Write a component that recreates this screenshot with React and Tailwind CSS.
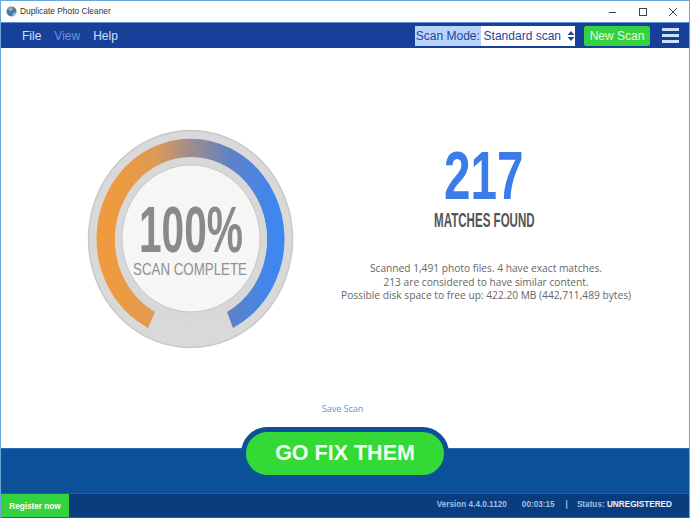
import { useId } from "react";

const sans = "font-['Liberation_Sans',Arial,sans-serif]";
const open = "font-['Open_Sans','Noto_Sans',sans-serif]";

const Gauge = () => {
  const id = useId();
  return (
    <svg width="216" height="226" viewBox="83 126 216 226" className="shrink-0 overflow-visible">
      <defs>
        <linearGradient id={id} x1="95" x2="283" y1="0" y2="0" gradientUnits="userSpaceOnUse">
          <stop offset="0.12" stopColor="#ee9a3f" />
          <stop offset="0.32" stopColor="#de9a55" />
          <stop offset="0.52" stopColor="#9b8c90" />
          <stop offset="0.72" stopColor="#5e82c6" />
          <stop offset="0.95" stopColor="#3f86ef" />
        </linearGradient>
      </defs>
      <ellipse cx="190.5" cy="239" rx="102" ry="108.5" fill="#d9d9d9" stroke="#c8c8c8" strokeWidth="1.5" />
      <path
        d="M148 328 A94 100 0 1 1 233 328 L227 312 A76 82 0 1 0 155 312 Z"
        fill={`url(#${id})`}
      />
      <ellipse cx="191" cy="239" rx="76" ry="82" fill="#d8d8d8" />
      <ellipse cx="191" cy="238.5" rx="69" ry="73.5" fill="#f6f6f6" stroke="#c8c8c8" strokeWidth="1" />
      <text
        x="139"
        y="252"
        fontSize="65"
        fontWeight="700"
        fill="#8a8a8a"
        textLength="104"
        lengthAdjust="spacingAndGlyphs"
        fontFamily="'Liberation Sans', Arial, sans-serif"
      >
        100%
      </text>
      <text
        x="133"
        y="275"
        fontSize="16"
        fill="#8f8f8f"
        textLength="114"
        lengthAdjust="spacingAndGlyphs"
        fontFamily="'Liberation Sans', Arial, sans-serif"
      >
        SCAN COMPLETE
      </text>
    </svg>
  );
};

const WindowControls = () => (
  <div className="flex items-center text-[#444]">
    <svg width="30" height="12" viewBox="0 0 30 12" className="mr-[1px]">
      <path d="M12 6.5h7" stroke="currentColor" strokeWidth="1" />
    </svg>
    <svg width="30" height="12" viewBox="0 0 30 12">
      <rect x="11.5" y="2.5" width="7" height="7" fill="none" stroke="currentColor" strokeWidth="1" />
    </svg>
    <svg width="30" height="12" viewBox="0 0 30 12" className="mr-[1px]">
      <path d="M11 2l8 8M19 2l-8 8" stroke="currentColor" strokeWidth="1" />
    </svg>
  </div>
);

export default function App() {
  return (
    <div className={`flex h-[518px] w-[690px] flex-col overflow-hidden border-x border-t border-[#6aa6da] bg-white ${sans}`}>
      {/* title bar */}
      <div className="flex h-[21px] shrink-0 items-center justify-between pl-[5px]">
        <div className="flex items-center gap-[3px]">
          <svg width="11" height="11" viewBox="0 0 11 11">
            <circle cx="5.5" cy="5.5" r="5" fill="#3f7fa8" />
            <path d="M2 3.5a4 4 0 0 1 4-2.5l1 2-2.5 2.5z" fill="#c9a27c" />
            <path d="M6 9l3-3 1 1-2 3z" fill="#a5c8dc" />
          </svg>
          <span className="whitespace-nowrap text-[8.4px] leading-none text-[#333]">Duplicate Photo Cleaner</span>
        </div>
        <WindowControls />
      </div>

      {/* menu bar */}
      <div className="flex h-[26px] shrink-0 items-center border-t border-[#5f8fd0] bg-[#17409a] pl-[21px] pr-[10px]">
        <nav className="flex items-center gap-[13px] text-[12px] text-[#cfe0fb]">
          <span>File</span>
          <span className="text-[#6f93cf]">View</span>
          <span>Help</span>
        </nav>
        <div className="ml-auto flex h-[20px] w-[160px] items-center whitespace-nowrap text-[12px]">
          <span className="flex h-full w-[66px] items-center justify-center bg-[#b9d3f9] text-[#24459a]">Scan Mode:</span>
          <span className="flex h-full flex-1 items-center bg-white pl-[3px] text-[#24459a]">
            Standard scan
            <svg width="8" height="12" viewBox="0 0 8 12" className="ml-[6px]">
              <path d="M4 1l3.5 4h-7zM4 11l3.5-4h-7z" fill="#24459a" />
            </svg>
          </span>
        </div>
        <button className="ml-[9px] flex h-[20px] w-[66px] items-center justify-center rounded-[2px] bg-[#35d23f] text-[12px] text-[#e4fbe4]">
          New Scan
        </button>
        <div className="ml-[12px] flex w-[17px] flex-col gap-[3px]">
          <div className="h-[3px] bg-[#cfe0fb]" />
          <div className="h-[3px] bg-[#cfe0fb]" />
          <div className="h-[3px] bg-[#cfe0fb]" />
        </div>
      </div>

      {/* main */}
      <div className="relative flex min-h-0 flex-1 flex-col">
        <div className="flex flex-1 items-start pl-[82px] pt-[78px]">
          <Gauge />
          <div className="flex w-[374px] shrink-0 flex-col items-center pt-[15px]">
            <div className="mr-[4px] scale-x-[0.7] text-[68px] font-bold leading-[68px] text-[#3b7cea]">217</div>
            <div className="mr-[4px] mt-[-1px] scale-x-[0.55] whitespace-nowrap text-[21px] font-bold leading-[24px] text-[#555]">
              MATCHES FOUND
            </div>
            <div className={`mt-[30px] whitespace-nowrap text-center text-[10.2px] leading-[13.5px] text-[#666] ${open}`}>
              <p>Scanned 1,491 photo files. 4 have exact matches.</p>
              <p>213 are considered to have similar content.</p>
              <p>Possible disk space to free up: 422.20 MB (442,711,489 bytes)</p>
            </div>
          </div>
        </div>
        <div className={`mb-[33px] pr-[5px] text-center text-[9px] leading-[12px] text-[#4f9bd9] ${open}`}>Save Scan</div>
      </div>

      {/* action band */}
      <div className="relative h-[45px] shrink-0 border-t border-[#2f6db5] bg-[#0b5099]">
        <button className="absolute left-1/2 top-[-22px] flex h-[53px] w-[208px] -translate-x-1/2 items-center justify-center rounded-[27px] border-[5px] border-[#0b5099] bg-[#35d936] text-[21.5px] font-bold text-[#f0fdf0]">
          GO FIX THEM
        </button>
      </div>

      {/* status bar */}
      <div className="flex h-[25px] shrink-0 items-center border-y border-[#1767b8] bg-[#0a3d7d] text-[8.2px] font-bold text-[#9fc0e8]">
        <div className="flex h-full w-[68px] items-center justify-center bg-[#35d23f] pt-[3px] text-white">Register now</div>
        <div className="ml-auto flex items-center pr-[17px]">
          <span>Version 4.4.0.1120</span>
          <span className="ml-[15px]">00:03:15</span>
          <span className="ml-[11px]">|</span>
          <span className="ml-[9px]">
            Status: <span className="text-[#eaf2fc]">UNREGISTERED</span>
          </span>
        </div>
      </div>
    </div>
  );
}
